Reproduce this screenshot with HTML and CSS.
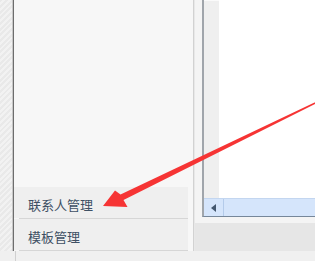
FILE: index.html
```html
<!DOCTYPE html>
<html lang="zh">
<head>
<meta charset="utf-8">
<title>联系人管理</title>
<link rel="stylesheet" href="styles.css">
</head>
<body>
<div class="app">
  <div class="main">
    <div class="strip"></div>
    <div class="sidebar">
      <div class="menu">
        <div class="menu-item">联系人管理</div>
        <div class="sep"></div>
        <div class="menu-item">模板管理</div>
        <div class="sep"></div>
      </div>
    </div>
    <div class="divider"></div>
    <div class="right">
      <div class="box">
        <div class="canvas">
          <div class="gutter"></div>
          <div class="sheet"></div>
        </div>
        <div class="hscroll">
          <div class="scroll-btn"><span class="tri"></span></div>
          <div class="scroll-track"></div>
        </div>
      </div>
      <div class="spacer"></div>
      <div class="panel"></div>
    </div>
  </div>
  <div class="status"><div class="status-line"></div></div>
  <svg class="arrow" width="315" height="261" viewBox="0 0 315 261">
    <polygon fill="#f63434" points="103,206 115,190.5 120.5,194.6 329.7,95.2 330.3,96.2 123.5,200 127.5,207"/>
  </svg>
</div>
</body>
</html>
```

FILE: styles.css
```css
html, body {
  margin: 0;
  padding: 0;
}
body {
  width: 315px;
  height: 261px;
  overflow: hidden;
  background: #f0f0f0;
  font-family: "Noto Sans CJK SC", "Noto Sans", sans-serif;
}
.app {
  position: relative;
  width: 315px;
  height: 261px;
  display: flex;
  flex-direction: column;
}
.main {
  display: flex;
  height: 251px;
}
.strip {
  width: 12px;
  flex: none;
  background: repeating-linear-gradient(135deg, #e9e9e9 0 2px, #f2f2f2 2px 4px);
  border-right: 1px solid #c8c8c8;
}
.sidebar {
  width: 180px;
  flex: none;
  box-sizing: border-box;
  background: #f7f7f7;
  border-left: 1px solid #6d6d6d;
  display: flex;
  flex-direction: column;
  justify-content: flex-end;
}
.menu {
  width: 174px;
  display: flex;
  flex-direction: column;
}
.menu-item {
  height: 31px;
  box-sizing: border-box;
  padding: 4px 0 0 14px;
  display: flex;
  align-items: center;
  background: #efefef;
  color: #3e5064;
  font-size: 13px;
}
.sep {
  height: 1px;
  margin-left: 5px;
  background: #d6d6d6;
}
.divider {
  width: 1px;
  flex: none;
  background: #d2d2d2;
  border-right: 1px solid #e8e8e8;
}
.right {
  flex: 1;
  display: flex;
  flex-direction: column;
  background: #f4f4f4;
}
.box {
  height: 217px;
  margin-left: 7px;
  box-sizing: border-box;
  border-left: 2px solid #a0a5ab;
  border-bottom: 1px solid #76879a;
  display: flex;
  flex-direction: column;
}
.canvas {
  flex: 1;
  display: flex;
}
.gutter {
  width: 15px;
  background: #efefef;
  border-top: 1px solid #fafafa;
}
.sheet {
  flex: 1;
  background: #ffffff;
}
.hscroll {
  height: 18px;
  display: flex;
  background: #d5e5fb;
  box-sizing: border-box;
  border-top: 1px solid #c3d6f0;
}
.scroll-btn {
  width: 19px;
  border-right: 1px solid #b4cbea;
  display: flex;
  align-items: center;
  justify-content: center;
}
.tri {
  width: 0;
  height: 0;
  border-top: 4px solid transparent;
  border-bottom: 4px solid transparent;
  border-right: 5px solid #43576f;
}
.scroll-track {
  flex: 1;
}
.spacer {
  height: 6px;
}
.panel {
  flex: 1;
  background: #e6e6e6;
}
.status {
  height: 10px;
  background: #f0f0f0;
  display: flex;
}
.status-line {
  width: 1px;
  margin-left: 15px;
  background: #d0d0d0;
}
.arrow {
  position: absolute;
  left: 0;
  top: 0;
  pointer-events: none;
}
```
